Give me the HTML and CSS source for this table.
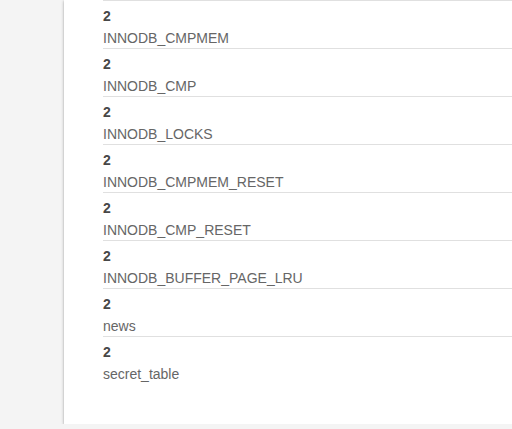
FILE: index.html
```html
<!DOCTYPE html>
<html>
<head>
<meta charset="utf-8">
<link rel="stylesheet" href="styles.css">
</head>
<body>
<div class="card">
  <ul class="list">
    <li class="item"><h3 class="count">2</h3><p class="name">INNODB_CMPMEM</p></li>
    <li class="item"><h3 class="count">2</h3><p class="name">INNODB_CMP</p></li>
    <li class="item"><h3 class="count">2</h3><p class="name">INNODB_LOCKS</p></li>
    <li class="item"><h3 class="count">2</h3><p class="name">INNODB_CMPMEM_RESET</p></li>
    <li class="item"><h3 class="count">2</h3><p class="name">INNODB_CMP_RESET</p></li>
    <li class="item"><h3 class="count">2</h3><p class="name">INNODB_BUFFER_PAGE_LRU</p></li>
    <li class="item"><h3 class="count">2</h3><p class="name">news</p></li>
    <li class="item"><h3 class="count">2</h3><p class="name">secret_table</p></li>
  </ul>
</div>
</body>
</html>
```
FILE: styles.css
```css
html, body {
  margin: 0;
  padding: 0;
  background: #f4f4f4;
  overflow: hidden;
}
body {
  font-family: "Liberation Sans", Arial, sans-serif;
}
.card {
  margin-left: 64px;
  background: #ffffff;
  height: 424px;
  box-shadow: 0 1px 3px rgba(0,0,0,0.3), 0 1px 1px rgba(0,0,0,0.14);
  box-sizing: border-box;
  padding-left: 39px;
}
.list {
  list-style: none;
  margin: 0;
  padding: 0;
}
.item {
  height: 48px;
  box-sizing: border-box;
  border-top: 1px solid #e0e0e0;
  padding-top: 5px;
}
.count {
  margin: 0;
  font-size: 14px;
  font-weight: bold;
  line-height: 20px;
  color: #474747;
}
.name {
  margin: 2px 0 0;
  font-size: 14px;
  line-height: 20px;
  color: #666666;
}
```
